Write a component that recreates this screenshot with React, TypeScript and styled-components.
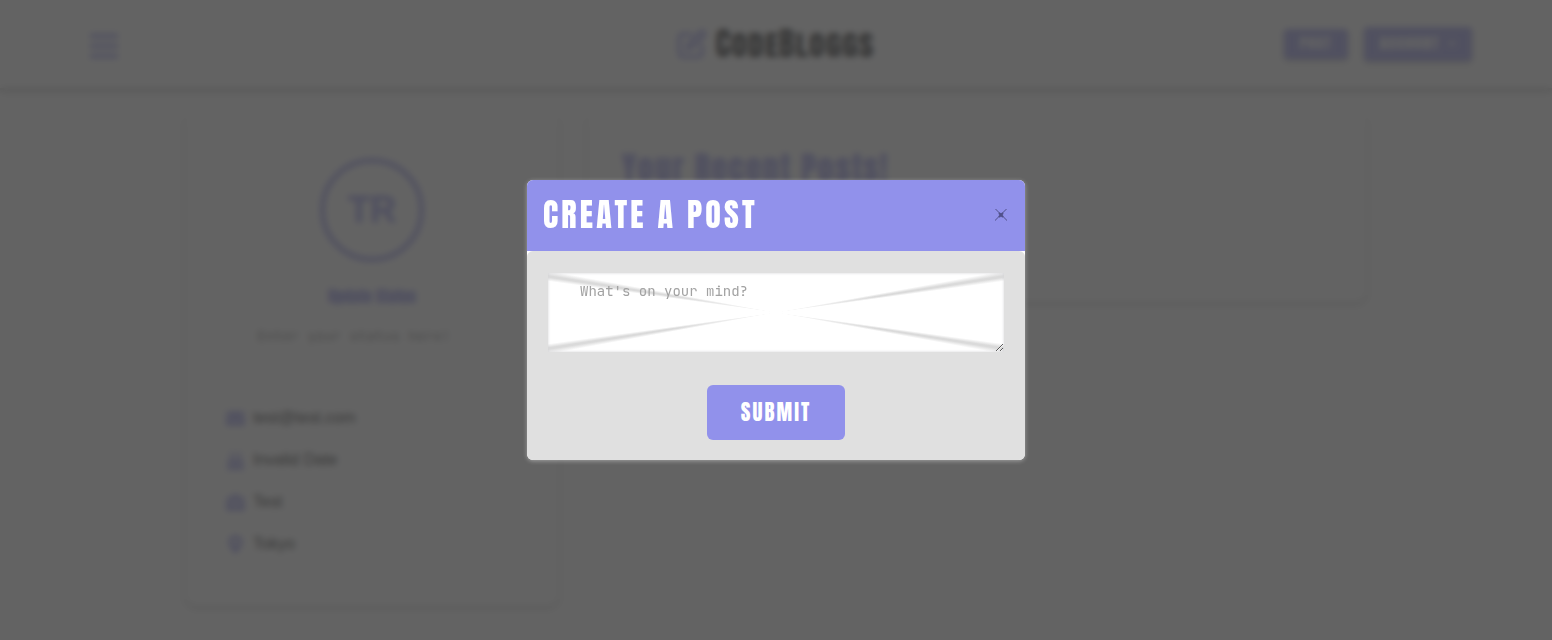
import React from 'react';
import styled, { createGlobalStyle } from 'styled-components';
import { FiEdit } from 'react-icons/fi';
import { FaBars, FaEnvelope, FaBirthdayCake, FaBriefcase, FaMapMarkerAlt } from 'react-icons/fa';

const accent = '#9191eb';
const display = '"Anton", "Liberation Sans Narrow", "Liberation Sans", sans-serif';
const mono = '"JetBrains Mono", "Liberation Mono", monospace';

const GlobalStyle = createGlobalStyle`
  *, *::before, *::after { box-sizing: border-box; }
  body {
    margin: 0;
    background: #fff;
    color: #000;
    font: 16px/24px "Liberation Sans", Arial, sans-serif;
  }
  button { border: 0; cursor: pointer; }
`;

const Page = styled.div`
  min-height: 100vh;
  overflow: hidden;
`;

const Header = styled.header`
  display: grid;
  grid-template-columns: 1fr auto 1fr;
  align-items: center;
  height: 88px;
  padding: 0 80px;
  box-shadow: 0 2px 6px rgba(0, 0, 0, 0.45);
`;

const MenuButton = styled.button`
  justify-self: start;
  display: flex;
  padding: 4px 8px 0;
  background: none;
  color: ${accent};
`;

const Brand = styled.a`
  display: flex;
  align-items: center;
  gap: 8px;
  color: #000;
  font: small-caps 400 32px/44px ${display};
  letter-spacing: 1px;
  text-decoration: none;

  svg {
    color: ${accent};
    stroke-width: 3px;
  }
`;

const Actions = styled.div`
  justify-self: end;
  display: flex;
  align-items: center;
  gap: 16px;
`;

const ActionButton = styled.button<{ $large?: boolean }>`
  height: ${({ $large }) => ($large ? 34 : 30)}px;
  padding: 0 16px;
  border-radius: 4px;
  background: ${accent};
  box-shadow: 0 2px 4px rgba(0, 0, 0, 0.3);
  color: #fff;
  font: 700 ${({ $large }) => ($large ? 14 : 13)}px/20px ${display};
  letter-spacing: 2px;
`;

const Caret = styled.span`
  display: inline-block;
  margin-left: 8px;
  border: 4px solid transparent;
  border-top-color: #fff;
  border-bottom: 0;
  vertical-align: middle;
`;

const Content = styled.main`
  display: grid;
  grid-template-columns: 374px 1fr;
  align-items: start;
  gap: 28px;
  max-width: 1182px;
  margin: 0 auto;
  padding-top: 24px;
`;

const Card = styled.section`
  border-radius: 12px;
  box-shadow: 0 2px 5px rgba(0, 0, 0, 0.3);
`;

const ProfileCard = styled(Card)`
  display: flex;
  flex-direction: column;
  align-items: center;
  padding: 46px 40px 50px;
`;

const PostsCard = styled(Card)`
  min-height: 190px;
  padding: 32px 35px;
`;

const PostsTitle = styled.h1`
  margin: 0;
  color: ${accent};
  font: 700 31px/48px ${display};
  letter-spacing: 2px;
`;

const Avatar = styled.div`
  display: grid;
  place-items: center;
  width: 104px;
  height: 104px;
  border: 5px solid ${accent};
  border-radius: 50%;
  color: ${accent};
  font: 700 36px/48px "Liberation Sans", Arial, sans-serif;
  -webkit-text-stroke: 1px ${accent};
`;

const StatusLabel = styled.label`
  margin-top: 22px;
  color: ${accent};
  font: 700 16px/24px ${display};
`;

const StatusInput = styled.textarea`
  width: 100%;
  height: 60px;
  margin-top: 16px;
  padding: 2px 32px;
  border: 0;
  background: none;
  font: 14px/20px ${mono};
  resize: none;

  &::placeholder { color: #777; }
`;

const Details = styled.ul`
  display: flex;
  flex-direction: column;
  align-self: stretch;
  gap: 18px;
  margin: 22px 0 0;
  padding: 0;
  list-style: none;
`;

const Detail = styled.li`
  display: grid;
  grid-template-columns: 20px 1fr;
  align-items: center;
  gap: 8px;

  svg {
    justify-self: center;
    color: ${accent};
  }
`;

const Backdrop = styled.div`
  position: fixed;
  inset: 0;
  display: grid;
  place-items: center;
  padding: 16px;
  background: rgba(67, 67, 67, 0.83);
  backdrop-filter: blur(3px);
`;

const Dialog = styled.div`
  width: 100%;
  max-width: 498px;
  border-radius: 6px;
  background: #fff;
  box-shadow: 0 1px 4px rgba(255, 255, 255, 0.4);
`;

const DialogHeader = styled.div`
  display: flex;
  align-items: center;
  justify-content: space-between;
  height: 71px;
  padding: 0 16px 2px;
  border-radius: 6px 6px 0 0;
  background: ${accent};
`;

const DialogTitle = styled.h2`
  margin: 0;
  color: #fff;
  font: 400 32px/38px ${display};
  letter-spacing: 0.1em;
`;

const CloseButton = styled.button`
  display: flex;
  padding: 0;
  background: none;
  color: #50508a;
`;

const DialogForm = styled.form`
  display: flex;
  flex-direction: column;
  align-items: center;
  gap: 33px;
  padding: 22px 21px 20px;
  border-radius: 6px;
  background: #e0e0e0;
`;

const PostInput = styled.textarea`
  display: block;
  width: 100%;
  height: 79px;
  padding: 8px 32px;
  border: 0;
  background:
    radial-gradient(ellipse closest-side, #fff, transparent 60%),
    conic-gradient(
      #fff 79.6deg, #dadada 80.8deg 81.2deg, #fff 82.2deg,
      #fff 97.8deg, #dadada 98.8deg 99.2deg, #fff 100.4deg,
      #fff 259.6deg, #dadada 260.8deg 261.2deg, #fff 262.2deg,
      #fff 277.8deg, #dadada 278.8deg 279.2deg, #fff 280.4deg
    );
  box-shadow: inset 0 0 3px #d4d4d8;
  font: 14px/20px ${mono};
  resize: vertical;

  &::placeholder { color: #a2a2a2; }
`;

const SubmitButton = styled.button`
  height: 55px;
  padding: 0 34px 2px;
  border-radius: 6px;
  background: ${accent};
  color: #fff;
  font: 400 21px/32px ${display};
  letter-spacing: 2px;
`;

const details = [
  { icon: FaEnvelope, text: 'test@test.com' },
  { icon: FaBirthdayCake, text: 'Invalid Date' },
  { icon: FaBriefcase, text: 'Test' },
  { icon: FaMapMarkerAlt, text: 'Tokyo' },
];

export default function App() {
  return (
    <>
      <GlobalStyle />
      <Page>
        <Header>
          <MenuButton aria-label="Menu"><FaBars size={32} /></MenuButton>
          <Brand href="#"><FiEdit size={30} />CodeBloggs</Brand>
          <Actions>
            <ActionButton>POST</ActionButton>
            <ActionButton $large>ACCOUNT<Caret /></ActionButton>
          </Actions>
        </Header>
        <Content>
          <ProfileCard>
            <Avatar>TR</Avatar>
            <StatusLabel htmlFor="status">Update Status</StatusLabel>
            <StatusInput id="status" placeholder="Enter your status here!" />
            <Details>
              {details.map(({ icon: Icon, text }) => (
                <Detail key={text}><Icon size={19} />{text}</Detail>
              ))}
            </Details>
          </ProfileCard>
          <PostsCard><PostsTitle>Your Recent Posts!</PostsTitle></PostsCard>
        </Content>
      </Page>
      <Backdrop>
        <Dialog role="dialog" aria-modal="true" aria-labelledby="dialog-title">
          <DialogHeader>
            <DialogTitle id="dialog-title">CREATE A POST</DialogTitle>
            <CloseButton aria-label="Close">
              <svg width="16" height="16" viewBox="0 0 16 16" fill="none" stroke="currentColor">
                <path d="M2 2l12 12M14 2L2 14M3 2l11 11M13 2L2 13" strokeWidth="1" strokeOpacity="0.5" />
                <path d="M6 6l4 4M10 6l-4 4" strokeWidth="2" />
              </svg>
            </CloseButton>
          </DialogHeader>
          <DialogForm onSubmit={(event) => event.preventDefault()}>
            <PostInput aria-label="Post" placeholder="What's on your mind?" />
            <SubmitButton>SUBMIT</SubmitButton>
          </DialogForm>
        </Dialog>
      </Backdrop>
    </>
  );
}
